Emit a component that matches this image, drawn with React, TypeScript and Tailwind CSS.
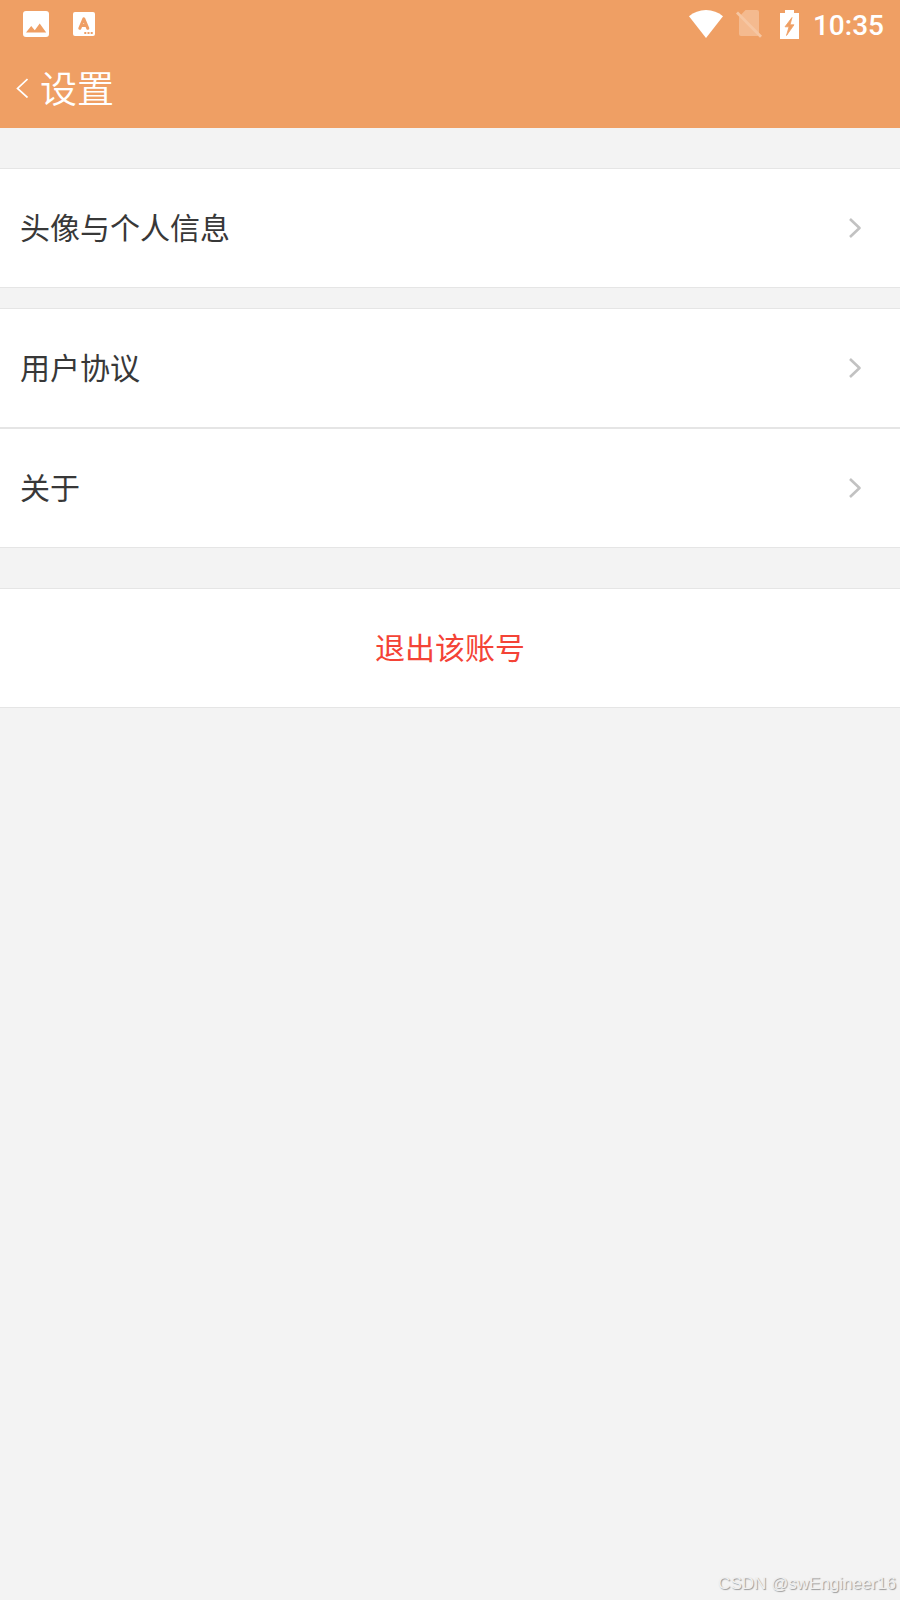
import type { ReactNode } from "react";

function PictureIcon() {
  return (
    <svg aria-hidden="true" className="h-[26px] w-[26px]" viewBox="0 0 26 26">
      <rect width="26" height="26" rx="3" fill="#fff" />
      <path d="M3 21.5 8.200 15l3.600 4.300L16.700 12.500 23.200 21.500Z" fill="#ef9f64" />
    </svg>
  );
}

function KeyboardLetterIcon() {
  return (
    <svg aria-hidden="true" className="h-6 w-[22px]" viewBox="0 0 22 24">
      <rect width="22" height="24" rx="2" fill="#fff" />
      <path d="M6.800 16.300 10.800 6.800 14.800 16.300M8.300 13.400h5" fill="none" stroke="#ef9f64" strokeWidth="3" strokeLinecap="round" strokeLinejoin="round" />
      <path d="M11.300 20h2v2h-2zM14.500 20h2v2h-2zM17.700 20h2v2h-2z" fill="#ef9f64" />
    </svg>
  );
}

function WifiIcon() {
  return (
    <svg aria-hidden="true" className="h-7 w-[34px]" viewBox="0 0 34 28">
      <path d="M0 6.200C4.800 2.300 10.500 0 17 0s12.200 2.300 17 6.200L17 28Z" fill="#fff" />
    </svg>
  );
}

function NoSimIcon() {
  return (
    <svg aria-hidden="true" className="h-7 w-[26px]" viewBox="0 0 26 28">
      <path d="M9.500 0H21a2 2 0 0 1 2 2v22a2 2 0 0 1-2 2H5a2 2 0 0 1-2-2V7Z" fill="#f4ba8f" />
      <path d="M1 2.500 25 26.800" stroke="#f6c6a2" strokeWidth="2.800" />
    </svg>
  );
}

function ChargingIcon() {
  return (
    <svg aria-hidden="true" className="h-[29px] w-[19px]" viewBox="0 0 19 29">
      <path d="M5 0h9v3h5v26H0V3h5Z" fill="#fff" />
      <path d="M12 7.500 5 16.800h4L6.500 25.500 14 14.800H10Z" fill="#ef9f64" stroke="#ef9f64" strokeWidth=".8" />
    </svg>
  );
}

function StatusBar() {
  return (
    <div className="flex h-12 items-center justify-between pr-4 pl-[23px]">
      <div className="flex items-center gap-6">
        <PictureIcon />
        <KeyboardLetterIcon />
      </div>
      <div className="flex items-center">
        <WifiIcon />
        <span className="ml-[13px] flex"><NoSimIcon /></span>
        <span className="ml-[18px] flex"><ChargingIcon /></span>
        <time className="ml-3.5 pt-1 font-[Roboto,sans-serif] text-[28px] leading-8 font-medium">10:35</time>
      </div>
    </div>
  );
}

function Row({ children }: { children: ReactNode }) {
  return (
    <a href="#" className="flex h-[120px] items-center justify-between border-y border-[#e5e5e5] bg-white pr-[38px] pl-5">
      <span className="pt-0.5">{children}</span>
      <svg aria-hidden="true" className="h-5 w-3.5" viewBox="0 0 14 20" fill="none">
        <path d="m2 1 9.500 9L2 19" stroke="#c2c2c2" strokeWidth="2.600" strokeLinejoin="round" />
      </svg>
    </a>
  );
}

export default function App() {
  return (
    <div className="flex min-h-screen flex-col bg-[#f3f3f3] font-['Liberation_Sans','Noto_Sans_CJK_SC',sans-serif] text-[30px] leading-[44px] text-[#383838]">
      <header className="bg-[#ef9f64] text-white">
        <StatusBar />
        <div className="flex h-20 items-center pl-4">
          <button type="button" aria-label="返回" className="flex">
            <svg aria-hidden="true" className="h-5 w-3" viewBox="0 0 12 20" fill="none">
              <path d="M11.500 1 1.500 10.500l10 9" stroke="#fff" strokeWidth="1.700" />
            </svg>
          </button>
          <h1 className="ml-3 pb-0.5 font-['Noto_Sans_CJK_SC',sans-serif] text-[37px] leading-[52px] font-[350]">设置</h1>
        </div>
      </header>
      <main>
        <nav className="flex flex-col gap-5 pt-10">
          <Row>头像与个人信息</Row>
          <div>
            <Row>用户协议</Row>
            <Row>关于</Row>
          </div>
        </nav>
        <button type="button" className="mt-10 h-[120px] w-full border-y border-[#e5e5e5] bg-white pt-0.5 text-[#f44336]">
          退出该账号
        </button>
      </main>
      <footer className="mt-auto pr-1 pb-1 text-right text-[17px] leading-6 text-[#f0f0f0] [text-shadow:1px_1px_1px_#999]">
        CSDN @swEngineer16
      </footer>
    </div>
  );
}
